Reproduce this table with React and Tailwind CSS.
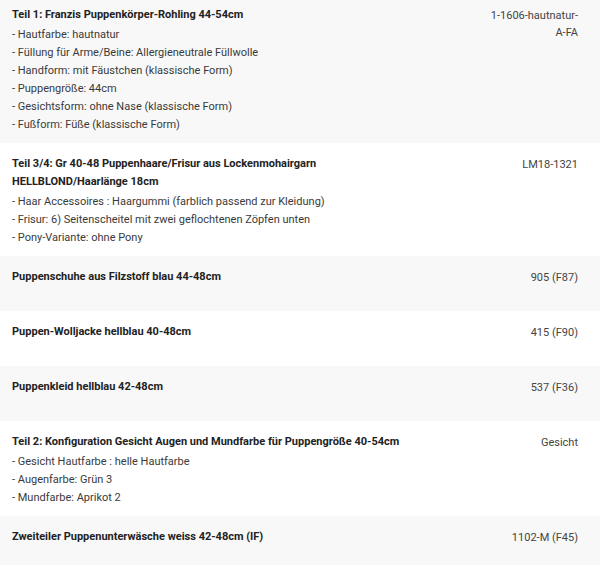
const rows = [
  {
    title: ["Teil 1: Franzis Puppenkörper-Rohling 44-54cm"],
    items: [
      "- Hautfarbe: hautnatur",
      "- Füllung für Arme/Beine: Allergieneutrale Füllwolle",
      "- Handform: mit Fäustchen (klassische Form)",
      "- Puppengröße: 44cm",
      "- Gesichtsform: ohne Nase (klassische Form)",
      "- Fußform: Füße (klassische Form)",
    ],
    code: "1-1606-hautnatur-A-FA",
    first: true,
  },
  {
    title: ["Teil 3/4: Gr 40-48 Puppenhaare/Frisur aus Lockenmohairgarn", "HELLBLOND/Haarlänge 18cm"],
    items: [
      "- Haar Accessoires : Haargummi (farblich passend zur Kleidung)",
      "- Frisur: 6) Seitenscheitel mit zwei geflochtenen Zöpfen unten",
      "- Pony-Variante: ohne Pony",
    ],
    code: "LM18-1321",
  },
  { title: ["Puppenschuhe aus Filzstoff blau 44-48cm"], items: [], code: "905 (F87)" },
  { title: ["Puppen-Wolljacke hellblau 40-48cm"], items: [], code: "415 (F90)" },
  { title: ["Puppenkleid hellblau 42-48cm"], items: [], code: "537 (F36)" },
  {
    title: ["Teil 2: Konfiguration Gesicht Augen und Mundfarbe für Puppengröße 40-54cm"],
    items: [
      "- Gesicht Hautfarbe : helle Hautfarbe",
      "- Augenfarbe: Grün 3",
      "- Mundfarbe: Aprikot 2",
    ],
    code: "Gesicht",
  },
  { title: ["Zweiteiler Puppenunterwäsche weiss 42-48cm (IF)"], items: [], code: "1102-M (F45)" },
];

const Row = ({ row, index }) => {
  const bg = index % 2 === 0 ? "bg-[#f8f8f8]" : "bg-white";
  const pad = row.first ? "pt-[6px]" : "pt-3";
  const bottom = row.items.length ? "pb-[9px]" : "pb-[25px]";
  return (
    <div className={`flex ${bg} ${pad} ${bottom} pl-3 pr-[22px]`}>
      <div className="flex-1">
        <div className="font-bold text-[#222] leading-[18px]">
          {row.title.map((t) => (
            <div key={t}>{t}</div>
          ))}
        </div>
        {row.items.length > 0 && (
          <ul className="mt-[2px] text-[#3a3a3a]">
            {row.items.map((it) => (
              <li key={it} className="leading-[18px]">{it}</li>
            ))}
          </ul>
        )}
      </div>
      <div className="w-[92px] text-right text-[#444] leading-[17px] pt-[1px] break-words">
        {row.code}
      </div>
    </div>
  );
};

export default function App() {
  return (
    <div
      className="w-[600px] h-[565px] overflow-hidden bg-white text-[11px]"
      style={{ fontFamily: "Roboto, 'Liberation Sans', sans-serif" }}
    >
      {rows.map((row, i) => (
        <Row key={i} row={row} index={i} />
      ))}
    </div>
  );
}
